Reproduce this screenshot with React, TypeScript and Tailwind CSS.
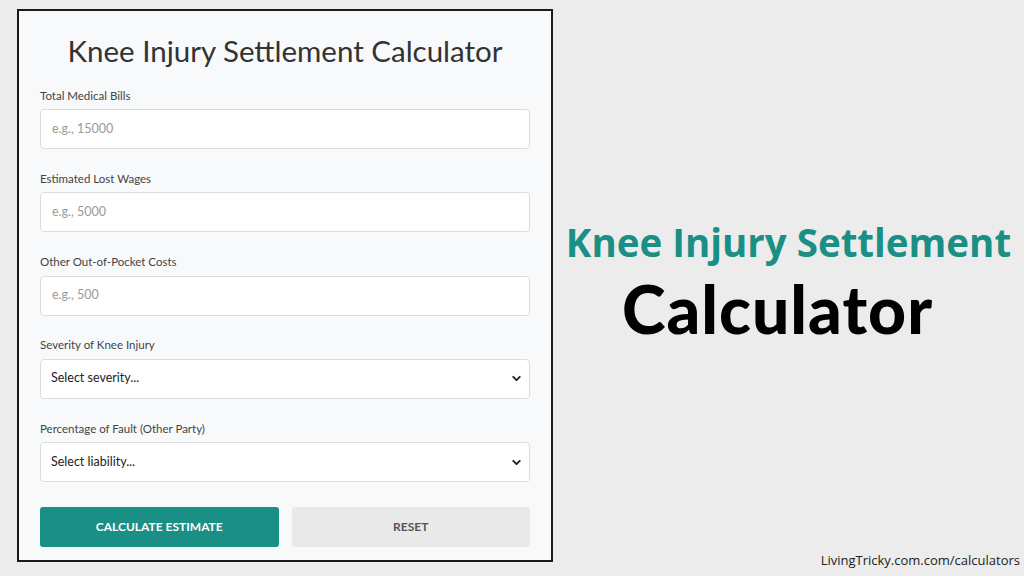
import { ChevronDown } from 'lucide-react';

const fields = [
  { label: 'Total Medical Bills', placeholder: 'e.g., 15000' },
  { label: 'Estimated Lost Wages', placeholder: 'e.g., 5000' },
  { label: 'Other Out-of-Pocket Costs', placeholder: 'e.g., 500' },
];

const selects = [
  { label: 'Severity of Knee Injury', value: 'Select severity...' },
  { label: 'Percentage of Fault (Other Party)', value: 'Select liability...' },
];

export default function App() {
  return (
    <div className="relative w-[1024px] h-[576px] bg-[#ececec] overflow-hidden flex font-['Lato',sans-serif]">
      {/* Calculator card */}
      <div className="ml-[17px] mt-[9px] w-[536px] h-[553px] border-2 border-[#1a1a1a] bg-[#f8f9fa] px-[21px] flex flex-col">
        <h1 className="text-center text-[29.5px] leading-none text-[#333] mt-[25px] mb-[24px]">
          Knee Injury Settlement Calculator
        </h1>

        {fields.map((f) => (
          <div key={f.label} className="mb-[23.75px]">
            <div className="text-[11.5px] leading-none text-[#444] mb-[8px]">{f.label}</div>
            <div className="h-[40px] bg-white border border-[#dcdcdc] rounded-[4px] flex items-center px-[11px] text-[12.5px] text-[#9a9a9a]">
              {f.placeholder}
            </div>
          </div>
        ))}

        {selects.map((s) => (
          <div key={s.label} className="mb-[23.75px]">
            <div className="text-[11.5px] leading-none text-[#444] mb-[8px]">{s.label}</div>
            <div className="h-[40px] bg-white border border-[#dcdcdc] rounded-[4px] flex items-center justify-between pl-[10px] pr-[6px] text-[12.5px] text-[#222]">
              <span>{s.value}</span>
              <ChevronDown className="w-[13px] h-[13px] text-[#222]" strokeWidth={3.5} />
            </div>
          </div>
        ))}

        <div className="flex gap-[13px] mt-[1.5px]">
          <button className="flex-1 h-[40px] bg-[#1a8f86] text-white rounded-[3px] text-[12px] font-bold">
            CALCULATE ESTIMATE
          </button>
          <button className="flex-1 h-[40px] bg-[#e9e9e9] text-[#555] rounded-[3px] text-[12px] font-bold">
            RESET
          </button>
        </div>
      </div>

      {/* Right headline */}
      <div className="flex-1 flex flex-col items-center pt-[223px]">
        <div className="text-[38.5px] font-bold text-[#1a8f86] leading-none font-['Open_Sans',sans-serif]">
          Knee Injury Settlement
        </div>
        <div className="text-[66px] font-black text-black leading-none mt-[14px] mr-[22px] tracking-[1px]">
          Calculator
        </div>
      </div>

      <div className="absolute right-[4px] bottom-[6px] text-[13px] text-[#222] font-['Open_Sans',sans-serif]">
        LivingTricky.com.com/calculators
      </div>
    </div>
  );
}
